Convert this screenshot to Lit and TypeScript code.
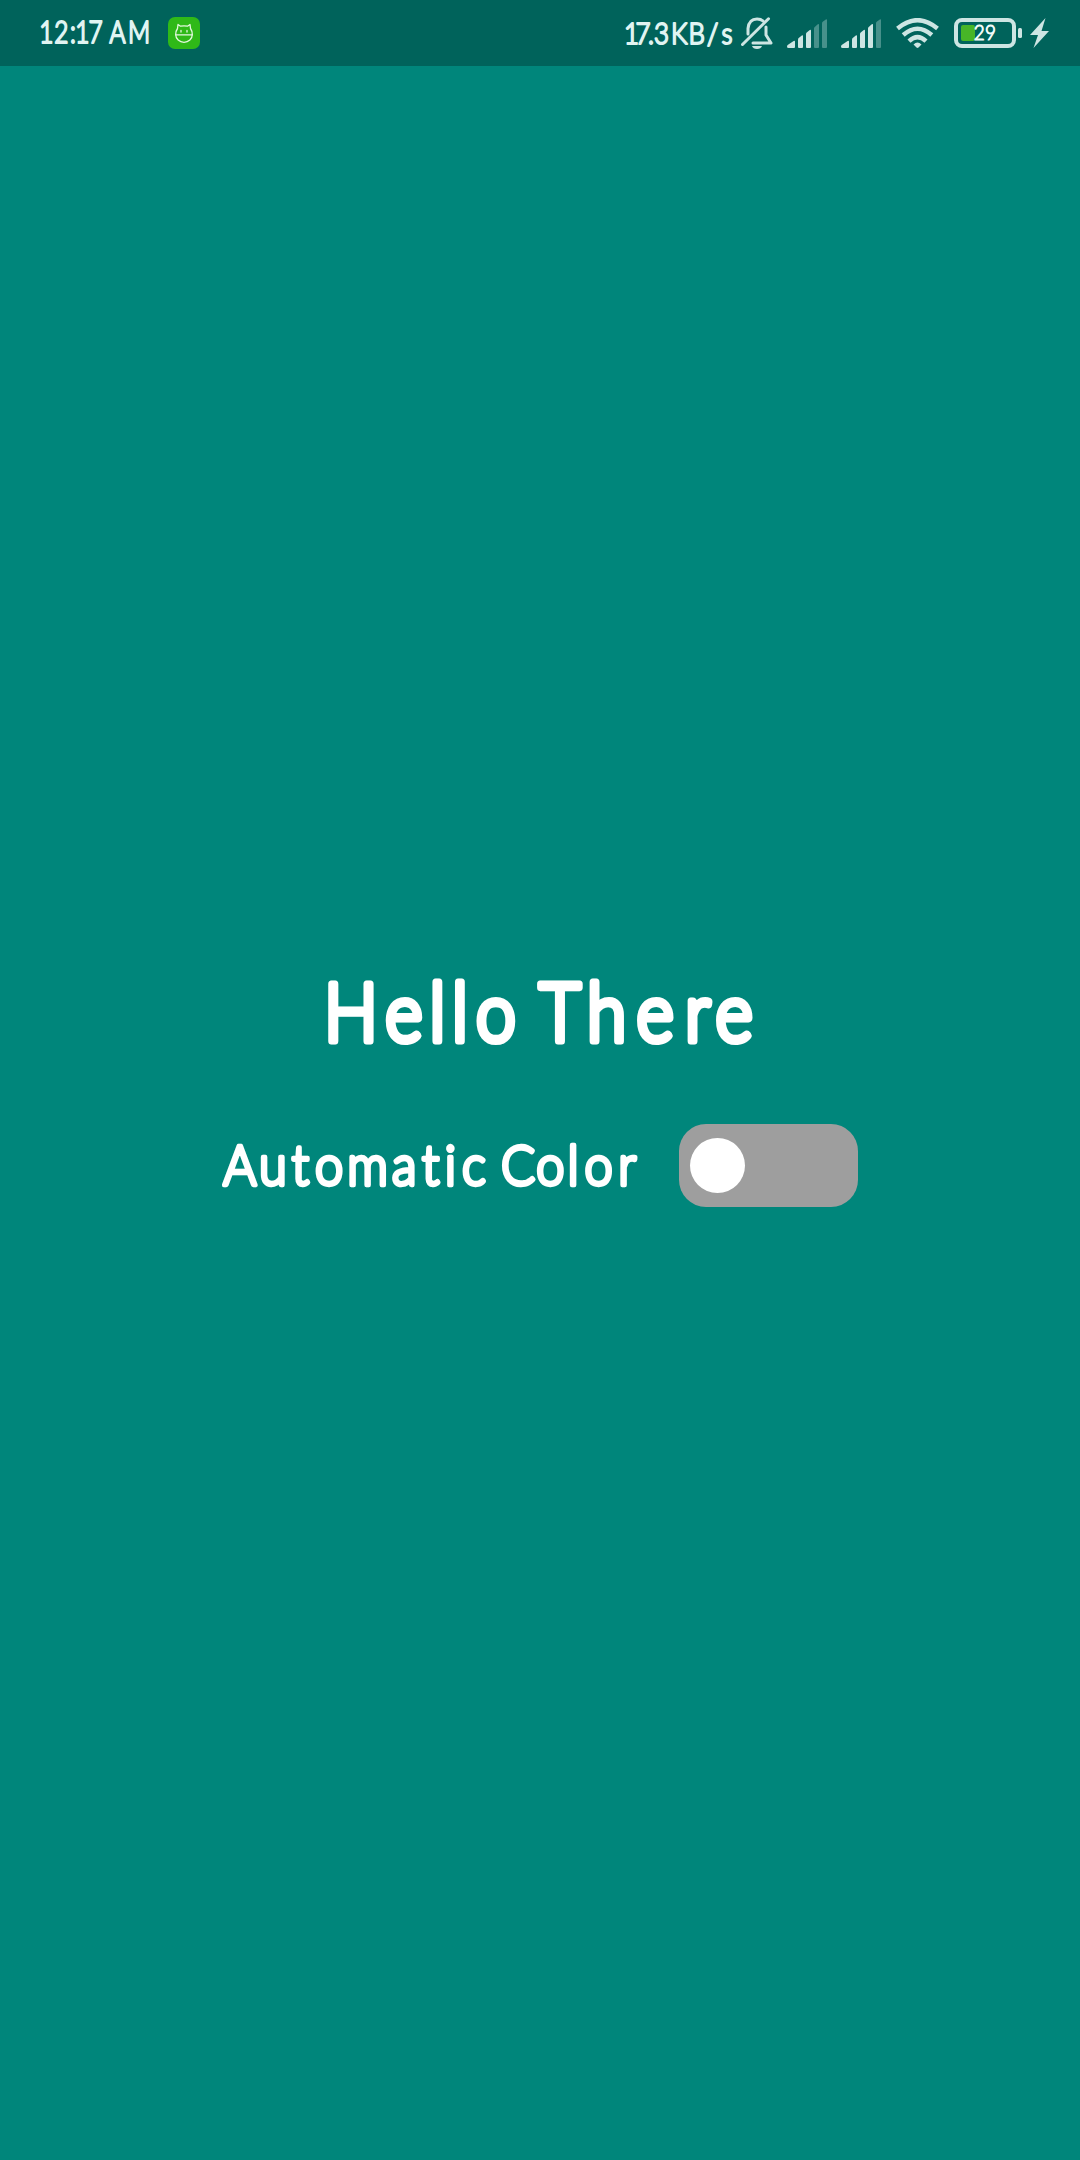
import { LitElement, html, svg, css } from "lit";
import { customElement, property } from "lit/decorators.js";

/** A line of lettering whose glyphs are centred on given x positions. */
@customElement("spaced-text")
class SpacedText extends LitElement {
  @property() text = "";
  @property({ attribute: false }) centers: number[] = [];
  @property({ type: Number }) left = 0;
  @property({ type: Number }) width = 0;
  @property({ type: Number }) height = 0;
  @property({ type: Number }) baseline = 0;
  @property({ type: Number }) size = 16;
  @property({ type: Number }) squeeze = 0.88;
  @property({ type: Number }) stroke = 1;
  static styles = css`
    :host { display: block; flex: none; }
    svg { display: block; overflow: visible; }
    text {
      font-family: Lato, "Liberation Sans", sans-serif;
      font-weight: 300;
      fill: currentColor;
      stroke: currentColor;
      stroke-linejoin: round;
      text-anchor: middle;
      white-space: pre;
    }
  `;
  render() {
    const xs: number[] = [];
    let i = 0;
    for (const ch of this.text) {
      if (ch === " ") xs.push((this.centers[i - 1] + this.centers[i]) / 2);
      else xs.push(this.centers[i++]);
    }
    const x = xs.map((v) => ((v - this.left) / this.squeeze).toFixed(2)).join(" ");
    return html`<svg width=${this.width} height=${this.height}>
      ${svg`<text transform="scale(${this.squeeze} 1)" x=${x} y=${this.baseline} font-size=${this.size} stroke-width=${this.stroke}>${this.text}</text>`}
    </svg>`;
  }
}

@customElement("signal-bars")
class SignalBars extends LitElement {
  @property({ type: Number }) level = 3;
  static styles = css`
    :host { display: block; flex: none; }
    svg { display: block; fill: #cde5e3; }
    .off { fill: #47918b; }
  `;
  render() {
    const bars = [
      "M0 27.5Q0 26.5 1 25.8L6.6 22Q8 21.2 8 22.6V28Q8 29 7 29H1.5Q0 29 0 27.5Z",
      "M11 20.5Q11 19.5 12 18.7L14.8 16.5Q16 15.8 16 17V28Q16 29 15 29H12Q11 29 11 28Z",
      "M19 15Q19 14 20 13.2L22.8 11Q24 10.3 24 11.5V28Q24 29 23 29H20Q19 29 19 28Z",
      "M27 9.5Q27 8.5 28 7.7L30.8 5.3Q32 4.6 32 5.8V28Q32 29 31 29H28Q27 29 27 28Z",
      "M35 4.3Q35 3.3 36 2.5L38.8.4Q40-.3 40 1V28Q40 29 39 29H36Q35 29 35 28Z",
    ];
    return html`<svg width="40" height="29" viewBox="0 0 40 29">
      ${bars.map((d, i) => svg`<path class=${i < this.level ? "on" : "off"} d=${d} />`)}
    </svg>`;
  }
}

@customElement("app-root")
class AppRoot extends LitElement {
  static styles = css`
    :host {
      display: flex;
      flex-direction: column;
      width: 1080px;
      height: 2160px;
      background: #00867b;
      color: #fff;
      overflow: hidden;
    }
    svg { display: block; flex: none; }
    .status {
      display: flex;
      align-items: center;
      justify-content: space-between;
      box-sizing: border-box;
      height: 66px;
      padding: 0 30px 0 38px;
      background: #00635b;
      color: #e0f4f2;
    }
    .group { display: flex; align-items: center; }
    .app { margin-left: 16px; }
    .bell { margin-left: 6px; }
    .sim { margin-left: 14px; }
    .wifi { margin-left: 15px; }
    .battery { margin-left: 15px; }
    .bolt { margin-left: 7px; }
    .level { position: relative; }
    .level spaced-text { position: absolute; left: 20px; top: 0; color: #f2fbfa; }
    .main {
      display: flex;
      flex-direction: column;
      align-items: center;
      padding-top: 894px;
      gap: 64px;
    }
    .row { display: flex; align-items: center; gap: 42px; margin-left: 1px; }
    .switch {
      display: flex;
      align-items: center;
      box-sizing: border-box;
      width: 179px;
      height: 83px;
      padding-left: 11px;
      border-radius: 27px;
      background: #9e9e9e;
    }
    .knob { width: 55px; height: 55px; border-radius: 50%; background: #fff; }
  `;
  render() {
    return html`
      <div class="status">
        <div class="group">
          <spaced-text text="12:17 AM" .centers=${[46.4, 61.3, 73, 82.3, 95.5, 117.5, 139.2]}
            left="38" width="114" height="32" baseline="26.4" size="30.5" stroke="2.1" squeeze="0.8"></spaced-text>
          <svg class="app" width="32" height="32" viewBox="0 0 32 32">
            <rect width="32" height="32" rx="7" fill="#2fb918" />
            <g fill="none" stroke="#e4f8df" stroke-width="1.3" stroke-linejoin="round" stroke-linecap="round">
              <path d="M9.5 11.5L10 7.5L12.5 9.2Q16 8.4 19.5 9.2L22 7.5L22.5 11.5Q24.3 14 24.3 17.5A8.3 7.8 0 0 1 7.7 17.5Q7.7 14 9.5 11.5Z" />
              <path d="M7.7 17.8H24.3M13 13.5V15M19 13.5V15" />
            </g>
          </svg>
        </div>
        <div class="group">
          <spaced-text text="17.3KB/s" .centers=${[630.6, 642, 650, 660.5, 678.3, 695.6, 711.7, 726]}
            left="624" width="110" height="32" baseline="26.6" size="29.4" stroke="2" squeeze="0.88"></spaced-text>
          <svg class="bell" width="32" height="32" viewBox="0 0 32 32" fill="none" stroke="#cde5e3" stroke-width="3" stroke-linecap="round">
            <path d="M7 17V11.5Q8 2 16 2Q20 2 22 4M25 10V18L30 26H12" stroke-linejoin="round" />
            <path d="M1.5 27.5L27.5 1.8" />
            <path d="M11 29H21Q20 32 16 32T11 29Z" fill="#cde5e3" stroke="none" />
          </svg>
          <signal-bars class="sim" level="3"></signal-bars>
          <signal-bars class="sim" level="4"></signal-bars>
          <svg class="wifi" width="43" height="30" viewBox="0 0 43 30" fill="none" stroke="#cde5e3" stroke-width="4.4">
            <path d="M1.5 10.5Q21.5-6.2 41.5 10.5" />
            <path d="M7.2 17Q21.5 4.4 35.8 17" />
            <path d="M13 23.2Q21.5 15 30 23.2" />
            <path d="M17.5 26.5Q21.5 22.6 25.5 26.5L22.5 29.6Q21.5 30.4 20.5 29.6Z" fill="#cde5e3" stroke="none" />
          </svg>
          <div class="battery level">
            <svg width="69" height="30" viewBox="0 0 69 30">
              <rect x="2" y="2" width="58" height="26" rx="6" fill="none" stroke="#cde5e3" stroke-width="4" />
              <rect x="7" y="7" width="14" height="16" rx="2" fill="#47b527" />
              <rect x="64" y="10" width="4" height="10" rx="1.5" fill="#cde5e3" />
            </svg>
            <spaced-text text="29" .centers=${[979.3, 990.5]} left="974" width="24" height="30"
              baseline="21.9" size="21.5" stroke="1.1"></spaced-text>
          </div>
          <svg class="bolt" width="20" height="30" viewBox="0 0 20 30">
            <path d="M15.5 0L0 17H8L3.5 30L19 13H11.5Z" fill="#cde5e3" />
          </svg>
        </div>
      </div>
      <div class="main">
        <spaced-text text="Hello There" .centers=${[352, 404.8, 438.5, 460.8, 497, 561, 607.7, 656, 698.5, 735]}
          left="329" width="424" height="100" baseline="80.8" size="81" stroke="7.2" squeeze="0.88"></spaced-text>
        <div class="row">
          <spaced-text text="Automatic Color"
            .centers=${[239.9, 273, 300.5, 329, 367.7, 404.3, 430.7, 450.3, 474, 518, 550.3, 573, 598.7, 627.3]}
            left="223" width="414" height="83" baseline="61" size="55.5" stroke="4.4" squeeze="0.91"></spaced-text>
          <div class="switch"><div class="knob"></div></div>
        </div>
      </div>
    `;
  }
}
